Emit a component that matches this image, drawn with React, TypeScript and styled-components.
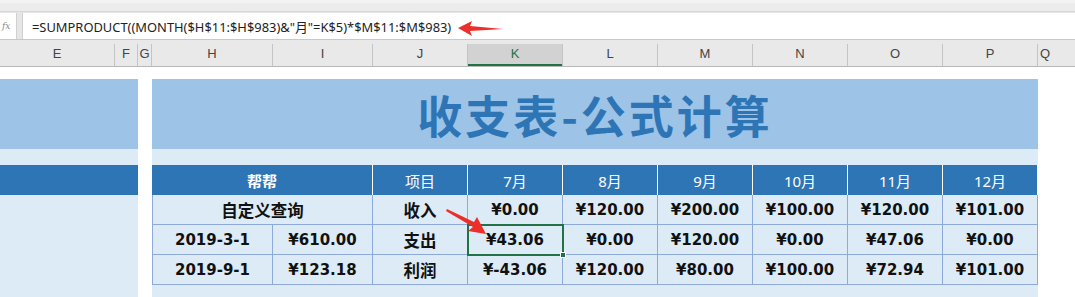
import React from "react";
import styled, { createGlobalStyle } from "styled-components";

const GlobalStyle = createGlobalStyle`
  html, body {
    margin: 0;
    padding: 0;
    background: #ffffff;
    overflow: hidden;
  }
`;

const CJK = `"Noto Sans", "Noto Sans CJK SC", sans-serif`;
const CELL_FONT = `"DejaVu Sans", "Noto Sans CJK SC", sans-serif`;

const Screen = styled.div`
  position: relative;
  width: 1075px;
  height: 297px;
  overflow: hidden;
  background: #ffffff;
  font-family: ${CJK};
`;

const Ribbon = styled.div`
  height: 12px;
  background: #ececec;
  border-bottom: 1px solid #d6d6d6;
  box-sizing: border-box;
  border-top: 3px solid #f3f3f3;
`;

const FormulaBar = styled.div`
  display: flex;
  height: 28px;
  background: #e6e6e6;
  border-bottom: 1px solid #c8c8c8;
  box-sizing: border-box;
  padding-top: 1px;
`;

const FxBox = styled.div`
  width: 17px;
  background: #ffffff;
  border-right: 1px solid #d0d0d0;
  display: flex;
  align-items: center;
  justify-content: flex-start;
  color: #8a8a8a;
  font-family: "DejaVu Serif", serif;
  font-style: italic;
  font-size: 9px;
  padding-left: 2px;
  box-sizing: border-box;
`;

const FormulaInput = styled.div`
  flex: 1;
  margin-left: 5px;
  background: #ffffff;
  border-left: 1px solid #d0d0d0;
  display: flex;
  align-items: center;
  padding-left: 9px;
  font-size: 12.9px;
  color: #222;
  white-space: nowrap;
`;

const ColumnHeaders = styled.div`
  display: grid;
  grid-template-columns: 115px 23px 14px 121px 100px repeat(7, 95px) 1fr;
  height: 27px;
  background: #e9e9e9;
  border-bottom: 1px solid #b8b8b8;
  box-sizing: border-box;
`;

const ColLetter = styled.div<{ $active?: boolean }>`
  display: flex;
  align-items: center;
  justify-content: center;
  font-family: "Liberation Sans", Arial, sans-serif;
  font-size: 13px;
  color: ${(p) => (p.$active ? "#217346" : "#444")};
  background: ${(p) => (p.$active ? "#d2d2d2" : "transparent")};
  border-right: 1px solid #c4c4c4;
  box-shadow: ${(p) => (p.$active ? "inset 0 -2px 0 #217346" : "none")};
  margin-top: 4px;
  padding-bottom: 3px;
  &:last-child {
    border-right: none;
    justify-content: flex-start;
    padding-left: 2px;
  }
`;

const Sheet = styled.div`
  display: flex;
  padding-top: 12px;
  height: 218px;
`;

const SidePanel = styled.div`
  width: 138px;
  display: flex;
  flex-direction: column;
  background: #ddebf7;
`;

const MainPanel = styled.div`
  width: 886px;
  margin-left: 14px;
  display: flex;
  flex-direction: column;
  background: #ddebf7;
`;

const TitleBand = styled.div`
  height: 70px;
  background: #9dc3e6;
  display: flex;
  align-items: center;
  justify-content: center;
`;

const Title = styled.h1`
  margin: 0;
  font-family: "Noto Sans CJK SC", sans-serif;
  font-weight: 700;
  font-size: 45px;
  letter-spacing: 3px;
  color: #2e75b6;
  line-height: 1;
`;

const Spacer = styled.div`
  height: 16px;
`;

const DarkBand = styled.div`
  height: 30px;
  background: #2e75b6;
`;

const Table = styled.div`
  display: grid;
  grid-template-columns: 121px 100px repeat(7, 95px);
  grid-auto-rows: 30px;
`;

const HeadCell = styled.div<{ $span?: number; $bold?: boolean }>`
  grid-column: span ${(p) => p.$span ?? 1};
  display: flex;
  align-items: center;
  justify-content: center;
  background: #2e75b6;
  color: #ffffff;
  font-size: 15px;
  font-weight: ${(p) => (p.$bold ? 700 : 400)};
  border-right: 1px solid #ffffff;
  box-sizing: border-box;
  &:last-of-type {
    border-right: none;
  }
`;

const Cell = styled.div<{ $span?: number; $first?: boolean; $selected?: boolean; $label?: boolean }>`
  position: relative;
  grid-column: span ${(p) => p.$span ?? 1};
  display: flex;
  align-items: center;
  justify-content: center;
  font-family: ${CELL_FONT};
  font-size: ${(p) => (p.$label ? "16.5px" : "15px")};
  font-weight: 700;
  color: #111;
  box-sizing: border-box;
  border-right: 1px solid #8eaadb;
  border-bottom: 1px solid #8eaadb;
  border-left: ${(p) => (p.$first ? "1px solid #8eaadb" : "none")};
  outline: ${(p) => (p.$selected ? "2px solid #217346" : "none")};
  outline-offset: -1px;
  z-index: ${(p) => (p.$selected ? 1 : 0)};
`;

const FillHandle = styled.span`
  position: absolute;
  right: -4px;
  bottom: -4px;
  width: 6px;
  height: 6px;
  background: #217346;
  border: 1px solid #ffffff;
  box-sizing: border-box;
`;

const Arrow = styled.svg`
  position: absolute;
  pointer-events: none;
  z-index: 5;
`;

const columns = ["E", "F", "G", "H", "I", "J", "K", "L", "M", "N", "O", "P", "Q"];
const months = ["7月", "8月", "9月", "10月", "11月", "12月"];

const rows = [
  {
    left: [{ text: "自定义查询", span: 2, label: true }],
    item: "收入",
    values: ["¥0.00", "¥120.00", "¥200.00", "¥100.00", "¥120.00", "¥101.00"],
  },
  {
    left: [{ text: "2019-3-1" }, { text: "¥610.00" }],
    item: "支出",
    values: ["¥43.06", "¥0.00", "¥120.00", "¥0.00", "¥47.06", "¥0.00"],
  },
  {
    left: [{ text: "2019-9-1" }, { text: "¥123.18" }],
    item: "利润",
    values: ["¥-43.06", "¥120.00", "¥80.00", "¥100.00", "¥72.94", "¥101.00"],
  },
];

export default function App() {
  return (
    <Screen>
      <GlobalStyle />
      <Ribbon />
      <FormulaBar>
        <FxBox>fx</FxBox>
        <FormulaInput>=SUMPRODUCT((MONTH($H$11:$H$983)&"月"=K$5)*$M$11:$M$983)</FormulaInput>
      </FormulaBar>
      <ColumnHeaders>
        {columns.map((c) => (
          <ColLetter key={c} $active={c === "K"}>
            {c}
          </ColLetter>
        ))}
      </ColumnHeaders>

      <Sheet>
        <SidePanel>
          <TitleBand />
          <Spacer />
          <DarkBand />
        </SidePanel>

        <MainPanel>
          <TitleBand>
            <Title>收支表-公式计算</Title>
          </TitleBand>
          <Spacer />
          <Table>
            <HeadCell $span={2} $bold>
              帮帮
            </HeadCell>
            <HeadCell>项目</HeadCell>
            {months.map((m) => (
              <HeadCell key={m}>{m}</HeadCell>
            ))}

            {rows.map((row, r) => (
              <React.Fragment key={r}>
                {row.left.map((l, i) => (
                  <Cell key={i} $span={l.span} $first={i === 0} $label={l.label}>
                    {l.text}
                  </Cell>
                ))}
                <Cell $label>{row.item}</Cell>
                {row.values.map((v, i) => (
                  <Cell key={i} $selected={r === 1 && i === 0}>
                    {v}
                    {r === 1 && i === 0 && <FillHandle />}
                  </Cell>
                ))}
              </React.Fragment>
            ))}
          </Table>
        </MainPanel>
      </Sheet>

      <Arrow style={{ left: 455, top: 20 }} width="50" height="18" viewBox="0 0 50 18">
        <polygon points="3,8 17,1 15,6 48,9 15,11 17,16" fill="#ec2f2a" />
      </Arrow>
      <Arrow style={{ left: 444, top: 205 }} width="46" height="34" viewBox="0 0 46 34">
        <polygon points="3,4 30,17 33,12 42,29 24,26 29,22 2,6" fill="#ec2f2a" />
      </Arrow>
    </Screen>
  );
}
